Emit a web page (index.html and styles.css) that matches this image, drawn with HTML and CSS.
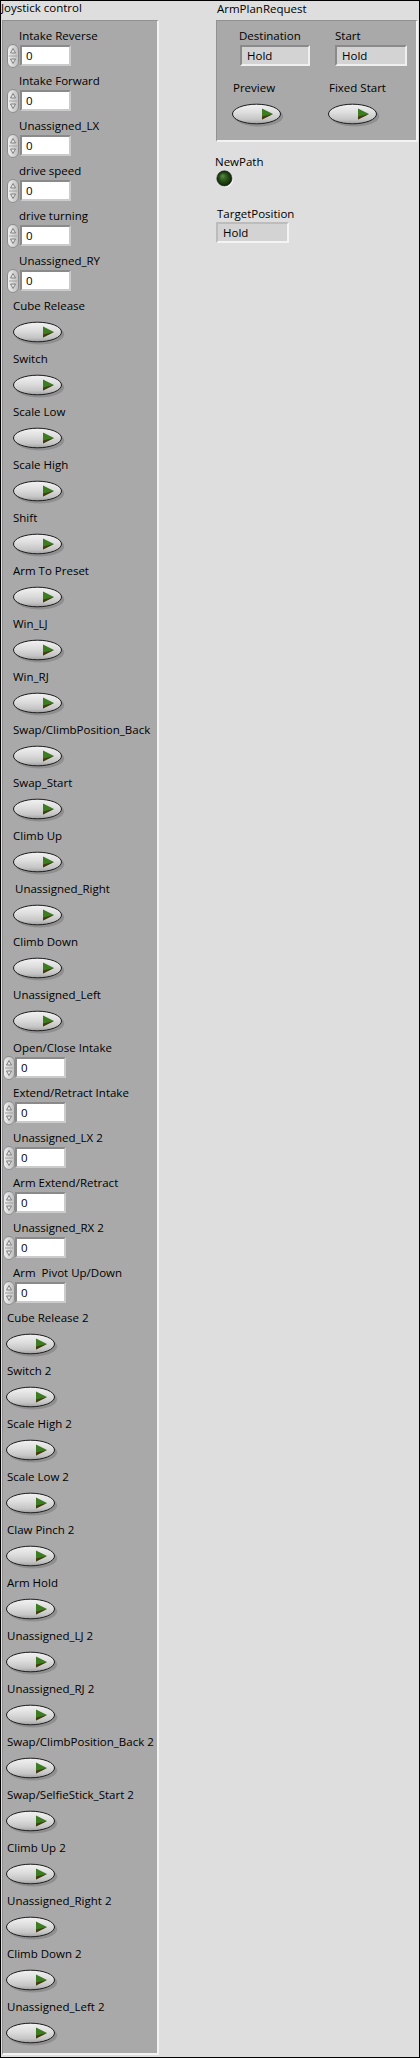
FILE: index.html
```html
<!DOCTYPE html>
<html>
<head>
<meta charset="utf-8">
<link rel="stylesheet" href="styles.css">
</head>
<body>
<svg class="defs" width="0" height="0" aria-hidden="true">
  <defs>
    <linearGradient id="gBtn" x1="0" y1="0" x2="0" y2="1">
      <stop offset="0" stop-color="#f3f3f3"/>
      <stop offset="0.45" stop-color="#dcdcdc"/>
      <stop offset="0.8" stop-color="#c4c4c4"/>
      <stop offset="1" stop-color="#9e9e9e"/>
    </linearGradient>
    <linearGradient id="gSpin" x1="0" y1="0" x2="1" y2="0">
      <stop offset="0" stop-color="#f2f2f2"/>
      <stop offset="1" stop-color="#bdbdbd"/>
    </linearGradient>
    <radialGradient id="gLed" cx="0.5" cy="0.5" r="0.5" fx="0.36" fy="0.33">
      <stop offset="0" stop-color="#5e8c4a"/>
      <stop offset="0.45" stop-color="#2d5a1d"/>
      <stop offset="1" stop-color="#0c2207"/>
    </radialGradient>
    <symbol id="btn" viewBox="0 0 52 24">
      <ellipse cx="26.6" cy="13.3" rx="24.6" ry="10.2" fill="#7a7a7a" opacity="0.55"/>
      <ellipse cx="24.5" cy="11" rx="24" ry="9.8" fill="url(#gBtn)" stroke="#1c1c1c" stroke-width="1"/>
      <polygon points="30,5.5 41,11 30,16.5" fill="#3d7d22"/>
      <polygon points="30,16.5 41,11 30,13.6" fill="#473a12"/>
    </symbol>
    <symbol id="spin" viewBox="0 0 12 24">
      <rect x="0.5" y="0.5" width="11" height="23" rx="5.5" fill="url(#gSpin)" stroke="#8c8c8c"/>
      <line x1="2" y1="12" x2="10" y2="12" stroke="#a0a0a0"/>
      <path d="M3.5 9 L6 4.5 L8.5 9 Z" fill="#e6e6e6" stroke="#6a6a6a" stroke-width="0.8"/>
      <path d="M3.5 15 L8.5 15 L6 19.5 Z" fill="#e6e6e6" stroke="#6a6a6a" stroke-width="0.8"/>
    </symbol>
    <symbol id="led" viewBox="0 0 18 18">
      <circle cx="9.6" cy="9.6" r="7.8" fill="#f6f6f6"/>
      <circle cx="8.4" cy="8.4" r="7.6" fill="url(#gLed)" stroke="#1e1e1e" stroke-width="0.6"/>
    </symbol>
  </defs>
</svg>

<div class="panel">
  <div class="left">
    <div class="clabel">Joystick control</div>
    <div class="cluster main">
      <div class="g1">
        <div class="num"><span class="lbl">Intake Reverse</span><div class="ctl"><svg class="spin"><use href="#spin"/></svg><div class="box">0</div></div></div>
        <div class="num"><span class="lbl">Intake Forward</span><div class="ctl"><svg class="spin"><use href="#spin"/></svg><div class="box">0</div></div></div>
        <div class="num"><span class="lbl">Unassigned_LX</span><div class="ctl"><svg class="spin"><use href="#spin"/></svg><div class="box">0</div></div></div>
        <div class="num"><span class="lbl">drive speed</span><div class="ctl"><svg class="spin"><use href="#spin"/></svg><div class="box">0</div></div></div>
        <div class="num"><span class="lbl">drive turning</span><div class="ctl"><svg class="spin"><use href="#spin"/></svg><div class="box">0</div></div></div>
        <div class="num"><span class="lbl">Unassigned_RY</span><div class="ctl"><svg class="spin"><use href="#spin"/></svg><div class="box">0</div></div></div>

        <div class="bool"><span class="lbl">Cube Release</span><svg class="btn"><use href="#btn"/></svg></div>
        <div class="bool"><span class="lbl">Switch</span><svg class="btn"><use href="#btn"/></svg></div>
        <div class="bool"><span class="lbl">Scale Low</span><svg class="btn"><use href="#btn"/></svg></div>
        <div class="bool"><span class="lbl">Scale High</span><svg class="btn"><use href="#btn"/></svg></div>
        <div class="bool"><span class="lbl">Shift</span><svg class="btn"><use href="#btn"/></svg></div>
        <div class="bool"><span class="lbl">Arm To Preset</span><svg class="btn"><use href="#btn"/></svg></div>
        <div class="bool"><span class="lbl">Win_LJ</span><svg class="btn"><use href="#btn"/></svg></div>
        <div class="bool"><span class="lbl">Win_RJ</span><svg class="btn"><use href="#btn"/></svg></div>
        <div class="bool"><span class="lbl">Swap/ClimbPosition_Back</span><svg class="btn"><use href="#btn"/></svg></div>
        <div class="bool"><span class="lbl">Swap_Start</span><svg class="btn"><use href="#btn"/></svg></div>
        <div class="bool"><span class="lbl">Climb Up</span><svg class="btn"><use href="#btn"/></svg></div>
        <div class="bool"><span class="lbl indent">Unassigned_Right</span><svg class="btn"><use href="#btn"/></svg></div>
        <div class="bool"><span class="lbl">Climb Down</span><svg class="btn"><use href="#btn"/></svg></div>
        <div class="bool"><span class="lbl">Unassigned_Left</span><svg class="btn"><use href="#btn"/></svg></div>
      </div>
      <div class="g2">
        <div class="num"><span class="lbl">Open/Close Intake</span><div class="ctl"><svg class="spin"><use href="#spin"/></svg><div class="box">0</div></div></div>
        <div class="num"><span class="lbl">Extend/Retract Intake</span><div class="ctl"><svg class="spin"><use href="#spin"/></svg><div class="box">0</div></div></div>
        <div class="num"><span class="lbl">Unassigned_LX 2</span><div class="ctl"><svg class="spin"><use href="#spin"/></svg><div class="box">0</div></div></div>
        <div class="num"><span class="lbl">Arm Extend/Retract</span><div class="ctl"><svg class="spin"><use href="#spin"/></svg><div class="box">0</div></div></div>
        <div class="num"><span class="lbl">Unassigned_RX 2</span><div class="ctl"><svg class="spin"><use href="#spin"/></svg><div class="box">0</div></div></div>
        <div class="num"><span class="lbl">Arm  Pivot Up/Down</span><div class="ctl"><svg class="spin"><use href="#spin"/></svg><div class="box">0</div></div></div>

        <div class="bool"><span class="lbl">Cube Release 2</span><svg class="btn"><use href="#btn"/></svg></div>
        <div class="bool"><span class="lbl">Switch 2</span><svg class="btn"><use href="#btn"/></svg></div>
        <div class="bool"><span class="lbl">Scale High 2</span><svg class="btn"><use href="#btn"/></svg></div>
        <div class="bool"><span class="lbl">Scale Low 2</span><svg class="btn"><use href="#btn"/></svg></div>
        <div class="bool"><span class="lbl">Claw Pinch 2</span><svg class="btn"><use href="#btn"/></svg></div>
        <div class="bool"><span class="lbl">Arm Hold</span><svg class="btn"><use href="#btn"/></svg></div>
        <div class="bool"><span class="lbl">Unassigned_LJ 2</span><svg class="btn"><use href="#btn"/></svg></div>
        <div class="bool"><span class="lbl">Unassigned_RJ 2</span><svg class="btn"><use href="#btn"/></svg></div>
        <div class="bool"><span class="lbl">Swap/ClimbPosition_Back 2</span><svg class="btn"><use href="#btn"/></svg></div>
        <div class="bool"><span class="lbl">Swap/SelfieStick_Start 2</span><svg class="btn"><use href="#btn"/></svg></div>
        <div class="bool"><span class="lbl">Climb Up 2</span><svg class="btn"><use href="#btn"/></svg></div>
        <div class="bool"><span class="lbl">Unassigned_Right 2</span><svg class="btn"><use href="#btn"/></svg></div>
        <div class="bool"><span class="lbl">Climb Down 2</span><svg class="btn"><use href="#btn"/></svg></div>
        <div class="bool"><span class="lbl">Unassigned_Left 2</span><svg class="btn"><use href="#btn"/></svg></div>
      </div>
    </div>
  </div>

  <div class="right">
    <div class="clabel">ArmPlanRequest</div>
    <div class="cluster arm">
      <div class="cell">
        <span class="lbl">Destination</span>
        <div class="ind dest">Hold</div>
      </div>
      <div class="cell">
        <span class="lbl">Start</span>
        <div class="ind start">Hold</div>
      </div>
      <div class="cell row2">
        <span class="lbl">Preview</span>
        <svg class="btn"><use href="#btn"/></svg>
      </div>
      <div class="cell row2">
        <span class="lbl">Fixed Start</span>
        <svg class="btn"><use href="#btn"/></svg>
      </div>
    </div>
    <div class="np">
      <span class="lbl">NewPath</span>
      <svg class="led"><use href="#led"/></svg>
    </div>
    <div class="tp">
      <span class="lbl">TargetPosition</span>
      <div class="ind target">Hold</div>
    </div>
  </div>
</div>
</body>
</html>
```

FILE: styles.css
```css
* {
  box-sizing: border-box;
}

html,
body {
  margin: 0;
  padding: 0;
}

body {
  width: 420px;
  height: 2058px;
  font-family: "Open Sans", "Liberation Sans", sans-serif;
  font-size: 11.5px;
  color: #000;
  background: #dedede;
  overflow: hidden;
}

.defs {
  display: block;
  width: 0;
  height: 0;
  overflow: hidden;
}

.panel {
  width: 420px;
  height: 2058px;
  border: 1px solid #000;
  background: #dedede;
  display: flex;
  align-items: flex-start;
  overflow: hidden;
}

.lbl {
  display: block;
  height: 14px;
  line-height: 14px;
  white-space: pre;
}

.clabel {
  height: 19px;
  line-height: 14px;
  white-space: nowrap;
}

.cluster {
  background: #a9a9a9;
  border-top: 1px solid #919191;
  border-left: 1px solid #919191;
  border-right: 2px solid #f3f3f3;
  border-bottom: 2px solid #f3f3f3;
}

/* left column */
.left {
  margin-left: 1px;
  width: 157px;
  flex: none;
}

.left .clabel {
  margin-left: -1px;
}

.main {
  width: 157px;
  padding-top: 8px;
}

.num {
  height: 45px;
}

.ctl {
  display: flex;
  align-items: flex-start;
  margin-top: 1px;
}

.spin {
  display: block;
  width: 12px;
  height: 24px;
  flex: none;
}

.box {
  width: 51px;
  height: 21px;
  margin-top: 1px;
  background: #fff;
  border: 2px solid;
  border-color: #8a8a8a #cbcbcb #cbcbcb #8a8a8a;
  padding-left: 4px;
  line-height: 17px;
}

.bool {
  height: 53px;
}

.btn {
  display: block;
  width: 52px;
  height: 24px;
  margin-top: 8px;
}

.g1 .num .lbl {
  padding-left: 16px;
}

.g1 .num .ctl {
  padding-left: 4px;
  gap: 1px;
}

.g1 .bool .lbl {
  padding-left: 10px;
}

.g1 .bool .lbl.indent {
  padding-left: 12px;
}

.g1 .bool .btn {
  margin-left: 10px;
}

.g2 .num .lbl {
  padding-left: 10px;
}

.g2 .bool .lbl {
  padding-left: 4px;
}

.g2 .bool .btn {
  margin-left: 3px;
}

/* right column */
.right {
  margin-left: 56px;
  width: 204px;
  flex: none;
}

.right .clabel {
  padding-left: 2px;
  padding-top: 1px;
}

.arm {
  margin-left: 1px;
  width: 202px;
  height: 122px;
  padding: 8px 0 0 22px;
  display: grid;
  grid-template-columns: 96px 96px;
  align-content: start;
}

.row2 {
  margin-left: -6px;
  margin-top: 15px;
}

.row2 .btn {
  margin-left: -1px;
}

.ind {
  height: 21px;
  background: #d3d3d3;
  border: 2px solid;
  border-color: #8a8a8a #efefef #efefef #8a8a8a;
  padding-left: 5px;
  line-height: 17px;
  margin-top: 2px;
}

.ind.dest {
  width: 70px;
  margin-left: 1px;
}

.ind.start {
  width: 72px;
}

.np {
  margin-top: 13px;
}

.led {
  display: block;
  width: 18px;
  height: 18px;
  margin-top: 1px;
  margin-left: 1px;
}

.tp {
  margin-top: 19px;
}

.tp .lbl {
  padding-left: 2px;
}

.ind.target {
  width: 73px;
  margin-top: 1px;
  margin-left: 1px;
  border-color: #bcbcbc #f4f4f4 #f4f4f4 #bcbcbc;
}
```
